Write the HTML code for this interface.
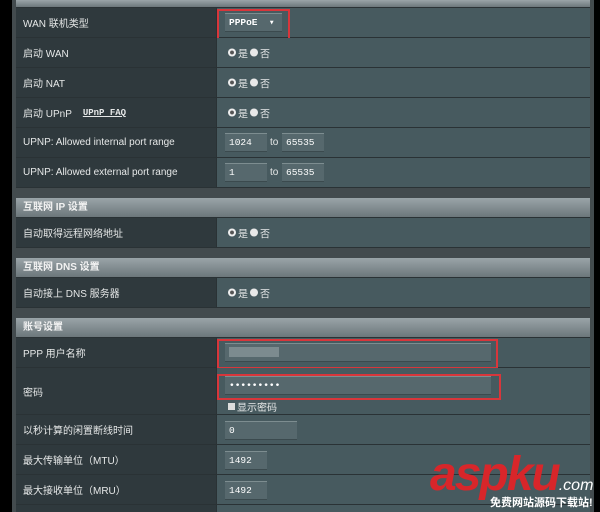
<!DOCTYPE html>
<html style="overflow:hidden;height:512px"><head><meta charset="utf-8"><style>
*{margin:0;padding:0;box-sizing:border-box}
body{width:600px;height:512px;background:#000;position:relative;overflow:hidden;font-family:"Liberation Sans","Noto Sans CJK SC",sans-serif;font-size:10px;color:#e6e8e8}
.frame{position:absolute;left:12px;top:0;width:582px;height:512px;background:#434b4e}
.row{position:absolute;left:16px;width:574px;border-bottom:1px solid #2a3235}
.lab{position:absolute;left:0;top:0;bottom:0;width:200px;background:#2f393d;padding-left:7px;display:flex;align-items:center}
.val{position:absolute;left:200px;right:0;top:0;bottom:0;background:#475a5f;border-left:1px solid #2a3235}
.hd{position:absolute;left:16px;width:574px;height:20px;background:linear-gradient(#9aa4a8,#6c777b);padding-left:7px;line-height:20px;font-weight:bold;color:#f2f2f2;border-bottom:1px solid #2a3235}
.rad{position:absolute;top:50%;transform:translateY(-50%);left:11px;display:flex;align-items:center;gap:2px;font-size:10px}
.r{width:8px;height:8px;border-radius:50%;background:#e8e8e8;display:inline-block}
.r.on{background:radial-gradient(#555 30%,#eee 40%)}
.inp{position:absolute;height:19px;background:#56686d;border-top:1px solid #7d8d90;border-bottom:1px solid #3b4a4e;color:#fff;font-family:"Liberation Mono",monospace;font-size:9.5px;padding-left:4px;line-height:17px}
.red{position:absolute;border:2px solid #d8363b}
</style></head><body>
<div class="frame"></div>
<div class="hd" style="top:0;height:8px"></div>
<div class="row" style="top:8px;height:30px"><div class="lab">WAN 联机类型</div><div class="val"><div class="inp" style="left:8px;top:5px;width:57px;font-weight:bold">PPPoE &nbsp;▾</div></div></div>
<div class="red" style="left:217px;top:9px;width:73px;height:32px"></div>
<div class="row" style="top:38px;height:30px"><div class="lab">启动 WAN</div><div class="val"><div class="rad"><span class="r on"></span>是 <span class="r"></span>否</div></div></div>
<div class="row" style="top:68px;height:30px"><div class="lab">启动 NAT</div><div class="val"><div class="rad"><span class="r on"></span>是 <span class="r"></span>否</div></div></div>
<div class="row" style="top:98px;height:30px"><div class="lab">启动 UPnP &nbsp;&nbsp;&nbsp;<u style="font-family:'Liberation Mono',monospace;font-size:9px;font-weight:bold">UPnP FAQ</u></div><div class="val"><div class="rad"><span class="r on"></span>是 <span class="r"></span>否</div></div></div>
<div class="row" style="top:128px;height:30px"><div class="lab">UPNP: Allowed internal port range</div><div class="val"><div class="inp" style="left:8px;top:5px;width:42px">1024</div><span style="position:absolute;left:53px;top:9px">to</span><div class="inp" style="left:65px;top:5px;width:42px">65535</div></div></div>
<div class="row" style="top:158px;height:30px"><div class="lab">UPNP: Allowed external port range</div><div class="val"><div class="inp" style="left:8px;top:5px;width:42px">1</div><span style="position:absolute;left:53px;top:9px">to</span><div class="inp" style="left:65px;top:5px;width:42px">65535</div></div></div>
<div class="hd" style="top:198px">互联网 IP 设置</div>
<div class="row" style="top:218px;height:30px"><div class="lab">自动取得远程网络地址</div><div class="val"><div class="rad"><span class="r on"></span>是 <span class="r"></span>否</div></div></div>
<div class="hd" style="top:258px">互联网 DNS 设置</div>
<div class="row" style="top:278px;height:30px"><div class="lab">自动接上 DNS 服务器</div><div class="val"><div class="rad"><span class="r on"></span>是 <span class="r"></span>否</div></div></div>
<div class="hd" style="top:318px">账号设置</div>
<div class="row" style="top:338px;height:30px"><div class="lab">PPP 用户名称</div><div class="val"><div class="inp" style="left:8px;top:5px;width:266px"><span style="display:inline-block;width:50px;height:10px;background:#7c8b8f;margin-top:3px"></span></div></div></div>
<div class="red" style="left:217px;top:339px;width:281px;height:30px"></div>
<div class="row" style="top:368px;height:47px"><div class="lab">密码</div><div class="val"><div class="inp" style="left:8px;top:8px;width:266px;font-weight:bold">•••••••••</div><div style="position:absolute;left:11px;top:31px;display:flex;align-items:center;gap:2px"><span style="width:7px;height:7px;background:#ddd;display:inline-block"></span>显示密码</div></div></div>
<div class="red" style="left:217px;top:374px;width:284px;height:26px"></div>
<div class="row" style="top:415px;height:30px"><div class="lab">以秒计算的闲置断线时间</div><div class="val"><div class="inp" style="left:8px;top:6px;width:72px">0</div></div></div>
<div class="row" style="top:445px;height:30px"><div class="lab">最大传输单位（MTU）</div><div class="val"><div class="inp" style="left:8px;top:6px;width:42px">1492</div></div></div>
<div class="row" style="top:475px;height:30px"><div class="lab">最大接收单位（MRU）</div><div class="val"><div class="inp" style="left:8px;top:6px;width:42px">1492</div></div></div>
<div class="row" style="top:505px;height:7px;border-bottom:none"><div class="lab"></div><div class="val"></div></div>
<div style="position:absolute;left:430px;top:452px;color:#d8262a;font:italic bold 48px 'Liberation Sans',sans-serif;letter-spacing:-2px;line-height:46px">aspku<span style="font-size:16px;color:#fff;font-weight:normal;letter-spacing:0">.com</span></div>
<div style="position:absolute;left:490px;top:494px;color:#fff;font-size:11px;font-weight:bold">免费网站源码下载站!</div>
</body></html>
